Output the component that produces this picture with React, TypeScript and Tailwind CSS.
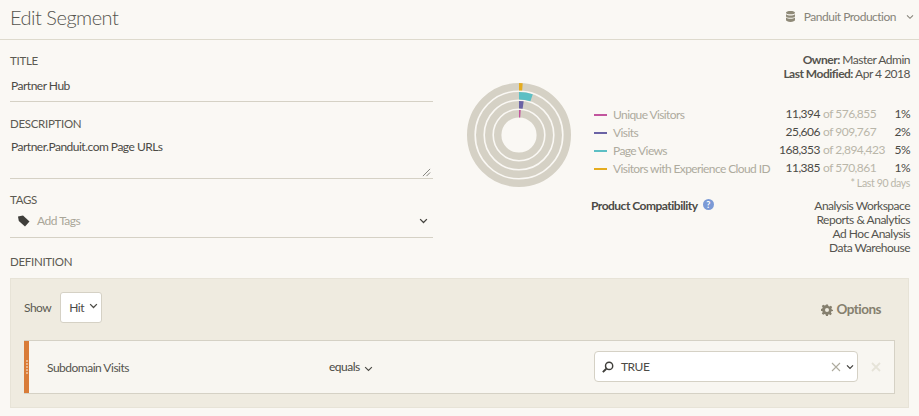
const font = { fontFamily: 'Lato, "Open Sans", sans-serif' };

function Chevron({ className = "", w = 2 }: { className?: string; w?: number }) {
  return (
    <svg viewBox="0 0 12 8" className={className} fill="none" stroke="currentColor" strokeWidth={w}>
      <path d="M1.5 1.5 L6 6 L10.5 1.5" />
    </svg>
  );
}

function Ring({ r, pct, color }: { r: number; pct: number; color: string }) {
  const c = 2 * Math.PI * r;
  return (
    <g fill="none" strokeWidth={7.4} transform="rotate(-90 52 52)">
      <circle cx={52} cy={52} r={r} stroke="#d5d1c5" />
      <circle cx={52} cy={52} r={r} stroke={color} strokeDasharray={`${c * pct} ${c}`} />
    </g>
  );
}

const legend = [
  { color: "bg-[#c2559e]", name: "Unique Visitors", a: "11,394", b: "576,855", p: "1%" },
  { color: "bg-[#6a63a5]", name: "Visits", a: "25,606", b: "909,767", p: "2%" },
  { color: "bg-[#5cbfc4]", name: "Page Views", a: "168,353", b: "2,894,423", p: "5%" },
  { color: "bg-[#e5ac1f]", name: "Visitors with Experience Cloud ID", a: "11,385", b: "570,861", p: "1%" },
];

export default function App() {
  return (
    <div style={font} className="w-[919px] h-[416px] overflow-hidden bg-[#faf8f4] text-[#4b4a45] text-[12px] tracking-[-0.5px]">
      <header className="h-[40px] border-b border-[#dedacd] flex items-center justify-between pl-[10px] pr-[5px] pb-[6px]">
        <h1 className="text-[20px] font-light text-[#55544e] tracking-[-0.5px]">Edit Segment</h1>
        <div className="flex items-center text-[#87847a]">
          <svg viewBox="0 0 10 12" className="w-[9px] h-[11px] text-[#8f8a78]" fill="currentColor">
            <path d="M0 1.8C0 .6 2.2 0 5 0s5 .6 5 1.8S7.8 3.6 5 3.6 0 3 0 1.8ZM0 3.4C1 4.4 3 4.8 5 4.8s4-.4 5-1.4v2.2C10 6.8 7.8 7.4 5 7.4S0 6.8 0 5.6ZM0 7.2c1 1 3 1.4 5 1.4s4-.4 5-1.4v2.8C10 11.2 7.8 12 5 12s-5-.8-5-2Z" />
          </svg>
          <span className="ml-[9px]">Panduit Production</span>
          <Chevron className="ml-[10px] w-[8px] h-[6px]" w={1.6} />
        </div>
      </header>

      <div className="flex pl-[10px] pr-[9px] h-[215px]">
        <div className="w-[423px] shrink-0">
          <div className="h-[21px] mt-[10px] flex items-center text-[11.5px] text-[#5c5a52] tracking-[-0.3px]">TITLE</div>
          <div className="h-[31px] border-b border-[#d5d1c5] pt-[5px] pl-[1px] leading-[20px]">Partner Hub</div>
          <div className="h-[21px] mt-[11px] flex items-center text-[11.5px] text-[#5c5a52] tracking-[-0.3px]">DESCRIPTION</div>
          <div className="h-[45px] border-b border-[#d5d1c5] pl-[1px] pr-[1px] flex justify-between">
            <span className="leading-[24px] mt-[1px] block">Partner.Panduit.com Page URLs</span>
            <svg viewBox="0 0 10 10" className="w-[9px] h-[9px] self-end mb-[1px] mr-[1px]" stroke="#6b6a63" strokeWidth={0.9}>
              <path d="M1 9 L9 1 M5 9 L9 5" />
            </svg>
          </div>
          <div className="h-[21px] mt-[10px] flex items-center text-[11.5px] text-[#5c5a52] tracking-[-0.3px]">TAGS</div>
          <div className="h-[28px] border-b border-[#d5d1c5] flex items-center pb-[5px] pl-[8px] pr-[5px]">
            <svg viewBox="0 0 12 12" className="w-[12px] h-[12px] text-[#3f3e3a]" fill="currentColor">
              <path d="M0 1.5 L5 .5 L11.5 6.5 L7 11.5 L.8 6 Z" />
            </svg>
            <span className="ml-[7px] text-[#a9a698]">Add Tags</span>
            <Chevron className="ml-auto w-[9px] h-[6px] text-[#45443f]" w={1.7} />
          </div>
        </div>

        <div className="flex-1 flex flex-col">
          <div className="h-[42px] pt-[13px] text-right leading-[14px] text-[#55544e]">
            <div><b className="font-bold">Owner:</b> Master Admin</div>
            <div><b className="font-bold">Last Modified:</b> Apr 4 2018</div>
          </div>
          <div className="flex">
            <svg viewBox="0 0 104 104" className="w-[104px] h-[104px] ml-[34px] mt-[1px] shrink-0 self-start">
              <Ring r={48.3} pct={0.0115} color="#e5ac1f" />
              <Ring r={39.3} pct={0.052} color="#5cbfc4" />
              <Ring r={30.3} pct={0.022} color="#6a63a5" />
              <Ring r={21.3} pct={0.0115} color="#c2559e" />
            </svg>
            <div className="ml-[20px] flex-1 pt-[24px]">
              <div className="pl-[3px]">
                {legend.map((l) => (
                  <div key={l.name} className="h-[18px] flex items-center leading-[18px]">
                    <span className={`w-[13px] h-[2px] ${l.color}`} />
                    <span className="ml-[6px] w-[160px] text-[#aeab9e] whitespace-nowrap tracking-[-0.6px]">{l.name}</span>
                    <span className="w-[47px] text-right text-[#4b4a45] -mt-[3px]">{l.a}</span>
                    <span className="ml-[3px] flex-1 text-[#b9b6a9] whitespace-nowrap -mt-[3px]">of {l.b}</span>
                    <span className="w-[20px] text-right text-[#4b4a45] -mt-[3px]">{l.p}</span>
                  </div>
                ))}
              </div>
              <div className="text-right text-[10.5px] tracking-[-0.35px] text-[#b9b6a9] leading-[12px] -mt-[1px]">* Last 90 days</div>
              <div className="flex justify-between mt-[10px]">
                <div className="flex items-start leading-[14px] font-bold text-[#4b4a45]">
                  Product Compatibility
                  <span className="ml-[5px] w-[11px] h-[11px] rounded-full bg-[#7b9ad6] text-white text-[9px] leading-[11px] text-center">?</span>
                </div>
                <div className="text-right leading-[14px] text-[#55544e]">
                  <div>Analysis Workspace</div>
                  <div>Reports &amp; Analytics</div>
                  <div>Ad Hoc Analysis</div>
                  <div>Data Warehouse</div>
                </div>
              </div>
            </div>
          </div>
        </div>
      </div>

      <div className="px-[10px]">
        <div className="h-[23px] leading-[14px] text-[11.5px] text-[#5c5a52] tracking-[-0.3px]">DEFINITION</div>
        <div className="h-[130px] bg-[#efebe0] border border-[#e7e3d7] px-[13px] pt-[13px]">
          <div className="h-[31px] flex items-center">
            <span className="text-[#5c5a52]">Show</span>
            <button className="ml-[9px] w-[42px] h-[31px] bg-white border border-[#d5d1c5] rounded-[3px] flex items-center pl-[8px] text-[#4b4a45]">
              Hit
              <Chevron className="ml-[5px] -mt-[4px] w-[9px] h-[6px]" w={1.7} />
            </button>
            <div className="ml-auto mr-[14px] mt-[4px] flex items-center font-bold text-[13.5px] tracking-[-0.5px] text-[#857f6e]">
              <svg viewBox="0 0 24 24" className="w-[12px] h-[12px] mr-[3px]" fill="currentColor">
                <path fillRule="evenodd" d="M10 1h4l.7 3.2 2.1.9L19.6 3.3 22.4 6 20.7 8.9l.9 2.1L24 12v2l-3.2.7-.9 2.1 1.8 2.8-2.8 2.8-2.8-1.8-2.1.9L14 24h-4l-.7-3.2-2.1-.9-2.8 1.800L1.600 19l1.800-2.800-.9-2.100L0 14v-4l2.500-.9.900-2.100L1.600 4.200 4.400 1.400l2.800 1.800 2.100-.9ZM12 8a4 4 0 1 0 0 8 4 4 0 0 0 0-8Z" />
              </svg>
              Options
            </div>
          </div>
          <div className="mt-[17px] h-[54px] w-[871px] bg-[#f8f6f1] border border-[#d5d1c5] border-l-0 flex items-center">
            <div className="w-[5px] h-full bg-[#d97c38] flex flex-col items-center justify-center gap-[1px]">
              {[0, 1, 2, 3, 4].map((i) => (
                <span key={i} className="w-[2px] h-[2px] bg-[#e9b58c]" />
              ))}
            </div>
            <div className="ml-[18px] w-[282px] text-[#55544e] mt-[2px]">Subdomain Visits</div>
            <div className="w-[265px] flex items-center text-[#4b4a45]">
              equals
              <Chevron className="ml-[4px] mt-[4px] w-[9px] h-[6px]" w={1.5} />
            </div>
            <div className="w-[264px] h-[31px] -mt-[1px] bg-white border border-[#d5d1c5] rounded-[4px] flex items-center pl-[7px] pr-[3px] text-[#4b4a45]">
              <svg viewBox="0 0 14 14" className="w-[12px] h-[12px]" fill="none" stroke="#3f3e3a" strokeWidth={1.7}>
                <circle cx="8.3" cy="5.7" r="4.2" />
                <path d="M5 9 L1 13" strokeWidth={2.2} />
              </svg>
              <span className="ml-[7px] mt-[1px]">TRUE</span>
              <svg viewBox="0 0 10 10" className="ml-auto w-[10px] h-[10px]" stroke="#aeab9e" strokeWidth={1.1}>
                <path d="M1 1 L9 9 M9 1 L1 9" />
              </svg>
              <Chevron className="ml-[5px] w-[8px] h-[6px] text-[#3f3e3a]" w={1.8} />
            </div>
            <svg viewBox="0 0 10 10" className="ml-[13px] w-[10px] h-[10px]" stroke="#e6e3d8" strokeWidth={1.8}>
              <path d="M1 1 L9 9 M9 1 L1 9" />
            </svg>
          </div>
        </div>
      </div>
    </div>
  );
}
